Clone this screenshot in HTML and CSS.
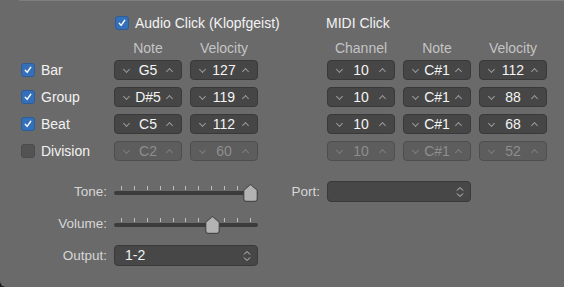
FILE: index.html
```html
<!DOCTYPE html>
<html lang="en">
<head>
    <meta charset="UTF-8">
    <title>Metronome Settings</title>
    <link rel="stylesheet" href="styles.css">
</head>
<body>
    <div class="topline"></div>

    <!-- Click sources -->
    <div class="clicks">
        <div class="grid audio">
            <div class="title">
                <span class="check on"><svg viewBox="0 0 14 14"><polyline points="3.8,7.3 6,9.8 10.2,3.8"/></svg></span>
                Audio Click (Klopfgeist)
            </div>
            <div></div>
            <div class="head">Note</div>
            <div class="head">Velocity</div>

            <div class="row-label"><span class="check on"><svg viewBox="0 0 14 14"><polyline points="3.8,7.3 6,9.8 10.2,3.8"/></svg></span>Bar</div>
            <div class="step"><i class="down"></i><span>G5</span><i class="up"></i></div>
            <div class="step"><i class="down"></i><span>127</span><i class="up"></i></div>

            <div class="row-label"><span class="check on"><svg viewBox="0 0 14 14"><polyline points="3.8,7.3 6,9.8 10.2,3.8"/></svg></span>Group</div>
            <div class="step"><i class="down"></i><span>D#5</span><i class="up"></i></div>
            <div class="step"><i class="down"></i><span>119</span><i class="up"></i></div>

            <div class="row-label"><span class="check on"><svg viewBox="0 0 14 14"><polyline points="3.8,7.3 6,9.8 10.2,3.8"/></svg></span>Beat</div>
            <div class="step"><i class="down"></i><span>C5</span><i class="up"></i></div>
            <div class="step"><i class="down"></i><span>112</span><i class="up"></i></div>

            <div class="row-label"><span class="check"></span>Division</div>
            <div class="step off"><i class="down"></i><span>C2</span><i class="up"></i></div>
            <div class="step off"><i class="down"></i><span>60</span><i class="up"></i></div>
        </div>

        <div class="grid midi">
            <div class="title">MIDI Click</div>
            <div class="head">Channel</div>
            <div class="head">Note</div>
            <div class="head">Velocity</div>

            <div class="step"><i class="down"></i><span>10</span><i class="up"></i></div>
            <div class="step"><i class="down"></i><span>C#1</span><i class="up"></i></div>
            <div class="step"><i class="down"></i><span>112</span><i class="up"></i></div>

            <div class="step"><i class="down"></i><span>10</span><i class="up"></i></div>
            <div class="step"><i class="down"></i><span>C#1</span><i class="up"></i></div>
            <div class="step"><i class="down"></i><span>88</span><i class="up"></i></div>

            <div class="step"><i class="down"></i><span>10</span><i class="up"></i></div>
            <div class="step"><i class="down"></i><span>C#1</span><i class="up"></i></div>
            <div class="step"><i class="down"></i><span>68</span><i class="up"></i></div>

            <div class="step off"><i class="down"></i><span>10</span><i class="up"></i></div>
            <div class="step off"><i class="down"></i><span>C#1</span><i class="up"></i></div>
            <div class="step off"><i class="down"></i><span>52</span><i class="up"></i></div>
        </div>
    </div>

    <!-- Sound controls -->
    <div class="controls">
        <div class="label">Tone:</div>
        <div class="slider">
            <div class="ticks"><b></b><b></b><b></b><b></b><b></b><b></b><b></b><b></b><b></b><b></b><b></b></div>
            <div class="track"></div>
            <svg class="thumb thumb-tone" viewBox="0 0 15 18"><path d="M7.5 0.8 Q8 0.8 8.5 1.3 L14.2 6.3 V15 Q14.2 17.3 12 17.3 H3 Q0.8 17.3 0.8 15 V6.3 L6.5 1.3 Q7 0.8 7.5 0.8 Z"/></svg>
        </div>
        <div class="label">Port:</div>
        <div class="popup"><span></span><svg class="updown" viewBox="0 0 8 12"><polyline points="1,4.5 4,1.5 7,4.5"/><polyline points="1,7.5 4,10.5 7,7.5"/></svg></div>

        <div class="label">Volume:</div>
        <div class="slider">
            <div class="ticks"><b></b><b></b><b></b><b></b><b></b><b></b><b></b><b></b><b></b><b></b><b></b></div>
            <div class="track"></div>
            <svg class="thumb thumb-volume" viewBox="0 0 15 18"><path d="M7.5 0.8 Q8 0.8 8.5 1.3 L14.2 6.3 V15 Q14.2 17.3 12 17.3 H3 Q0.8 17.3 0.8 15 V6.3 L6.5 1.3 Q7 0.8 7.5 0.8 Z"/></svg>
        </div>
        <div></div>
        <div></div>

        <div class="label">Output:</div>
        <div class="popup"><span>1-2</span><svg class="updown" viewBox="0 0 8 12"><polyline points="1,4.5 4,1.5 7,4.5"/><polyline points="1,7.5 4,10.5 7,7.5"/></svg></div>
    </div>
</body>
</html>
```

FILE: styles.css
```css
html {
    background-color: #1f1f1f;
}

body {
    margin: 0;
    width: 564px;
    height: 287px;
    background-color: #6a6a6a;
    border-bottom-left-radius: 6px;
    font-family: "Liberation Sans", Arial, sans-serif;
    font-size: 14px;
    color: #f2f2f2;
    overflow: hidden;
}

.topline {
    height: 1px;
    margin-left: 19px;
    background-color: #7e7e7e;
}

/* Top block: audio and midi click grids */
.clicks {
    display: flex;
    gap: 69px;
    padding: 15px 0 0 21px;
}

.grid {
    display: grid;
    grid-template-rows: 14px 16px repeat(4, 20px);
    row-gap: 7px;
    column-gap: 8px;
}

.audio {
    grid-template-columns: 85px 68px 68px;
}

.audio .title {
    grid-column: 2 / 4;
    margin-left: 1px;
}

.midi {
    grid-template-columns: 68px 68px 68px;
}

.midi .title {
    grid-column: 1 / 4;
    margin-left: -1px;
}

.title {
    display: flex;
    align-items: center;
    gap: 6px;
    line-height: 14px;
    white-space: nowrap;
}

.head {
    align-self: end;
    margin-bottom: -3px;
    line-height: 16px;
    text-align: center;
    color: #c4c4c4;
}

.row-label {
    display: flex;
    align-items: center;
    gap: 6px;
    line-height: 20px;
}

.check {
    width: 14px;
    height: 14px;
    box-sizing: border-box;
    border-radius: 3px;
    background-color: #535353;
    border: 1px solid #4b4b4b;
    display: inline-flex;
    flex-shrink: 0;
}

.check.on {
    background-color: #3470b9;
    border-color: #2d5d98;
}

.check svg {
    width: 12px;
    height: 12px;
    fill: none;
    stroke: #fff;
    stroke-width: 1.6;
    stroke-linecap: round;
    stroke-linejoin: round;
}

/* Stepper fields */
.step {
    display: flex;
    align-items: center;
    justify-content: space-between;
    padding: 0 9px 0 9px;
    box-sizing: border-box;
    background-color: #464646;
    border: 1px solid #393939;
    border-radius: 4px;
    line-height: 18px;
}

.step span {
    color: #f4f4f4;
}

.step i {
    width: 4px;
    height: 4px;
    border-right: 1px solid #9a9a9a;
    border-bottom: 1px solid #9a9a9a;
}

.step .down {
    transform: translateY(-1px) rotate(45deg);
}

.step .up {
    transform: translateY(1px) rotate(-135deg);
}

.step.off {
    background-color: #5d5d5d;
    border-color: #4e4e4e;
}

.step.off span {
    color: #8e8e8e;
}

.step.off i {
    border-color: #7e7e7e;
}

/* Bottom block */
.controls {
    display: grid;
    grid-template-columns: 107px 144px 55px 144px;
    grid-template-rows: repeat(3, 21px);
    column-gap: 7px;
    row-gap: 11px;
    margin-top: 20px;
}

.label {
    text-align: right;
    font-size: 13.5px;
    line-height: 21px;
    color: #d6d6d6;
}

.slider {
    position: relative;
}

.ticks {
    display: flex;
    justify-content: space-between;
    padding: 5px 7px 0 7px;
    height: 4px;
}

.ticks b {
    width: 1px;
    height: 4px;
    background-color: #bdbdbd;
}

.track {
    height: 4px;
    margin-top: 1px;
    border-radius: 2px;
    background-color: #3b3b3b;
}

.thumb {
    position: absolute;
    top: 3px;
    width: 15px;
    height: 18px;
    fill: #b3b3b3;
    stroke: #3a3a3a;
    stroke-width: 1;
}

.thumb-tone {
    left: 129px;
}

.thumb-volume {
    left: 91px;
}

.popup {
    display: flex;
    align-items: center;
    justify-content: space-between;
    padding: 0 6px 0 10px;
    box-sizing: border-box;
    background-color: #474747;
    border: 1px solid #393939;
    border-radius: 4px;
    line-height: 19px;
}

.updown {
    width: 8px;
    height: 12px;
    fill: none;
    stroke: #c8c8c8;
    stroke-width: 1;
}
```
